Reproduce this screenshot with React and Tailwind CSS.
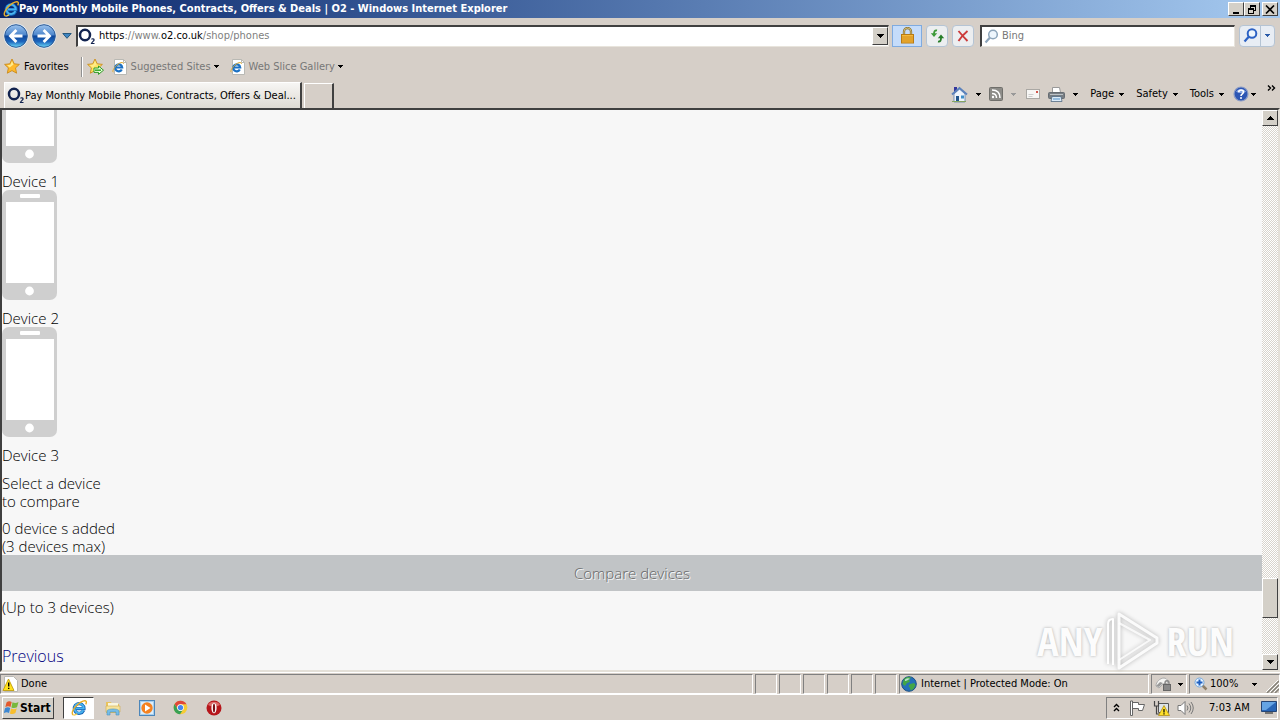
import React from "react";

const raised =
  "border border-t-white border-l-white border-r-[#404040] border-b-[#404040] bg-[#d4d0c8]";
const sunken =
  "border border-t-[#808080] border-l-[#808080] border-r-white border-b-white";

function Caret({ className = "text-black" }) {
  return (
    <svg className={`shrink-0 ${className}`} width="5" height="3" viewBox="0 0 5 3" fill="currentColor" shapeRendering="crispEdges" aria-hidden="true">
      <path d="M0 0h5v1H0zM1 1h3v1H1zM2 2h1v1H2z" />
    </svg>
  );
}

function ArrowGlyph({ up = false }) {
  return (
    <svg width="7" height="4" viewBox="0 0 7 4" shapeRendering="crispEdges" aria-hidden="true">
      <path d={up ? "M3 0h1v1H3zM2 1h3v1H2zM1 2h5v1H1zM0 3h7v1H0z" : "M0 0h7v1H0zM1 1h5v1H1zM2 2h3v1H2zM3 3h1v1H3z"} />
    </svg>
  );
}

function IeIcon({ size = 16 }) {
  return (
    <svg className="shrink-0" width={size} height={size} viewBox="0 0 16 16" fill="none" aria-hidden="true">
      <path d="M12.6 10.4A4.9 4.9 0 1 1 13 8.6H5" stroke="#1565b8" strokeWidth="3.2" />
      <path d="M12.4 10.2A4.7 4.7 0 1 1 12.8 8.4H5" stroke="#49b4ef" strokeWidth="1.8" />
      <path d="M2.2 14.8C-.2 13.2 2.4 8.2 6.6 4.5 10.2 1.3 14.6-.3 15.2 1.6c.3.8 0 1.8-.5 2.7" stroke="#e9ae27" strokeWidth="1.4" />
      <path d="M2.2 14.8c1 .5 2.6 0 4-1" stroke="#f4cd4a" strokeWidth="1.2" />
    </svg>
  );
}

function IePage() {
  return (
    <svg className="shrink-0" width="16" height="16" viewBox="0 0 16 16" fill="none" aria-hidden="true">
      <path d="M2.5.5h9l3 3v12h-12z" fill="#fff" stroke="#b9b9b4" />
      <path d="M11.5.5v3h3" stroke="#b9b9b4" />
      <path d="M9.800 10.500A3.500 3.500 0 1 1 10.200 8.500H4" stroke="#1d72c4" strokeWidth="2.200" />
      <path d="M1.3 13.2C-.3 12 3 7.5 6 5.2 8.500 3.300 11.500 2.800 11.500 4.800" stroke="#e2aa2b" />
    </svg>
  );
}

function O2Icon() {
  return (
    <svg className="shrink-0" width="18" height="17" viewBox="0 0 18 17" fill="none" aria-hidden="true">
      <ellipse cx="7" cy="7" rx="5" ry="5.300" stroke="#12234f" strokeWidth="2.500" />
      <path d="M13.500 11.400c.6-1 2.700-.8 2.600.5-.1 1.200-2 1.800-2.600 3.600h3" stroke="#12234f" strokeWidth="1.200" />
    </svg>
  );
}

function NavArrow({ flip = false }) {
  const id = flip ? "nav-forward" : "nav-back";
  return (
    <svg width="26" height="26" viewBox="0 0 26 26" aria-hidden="true">
      <defs>
        <linearGradient id={id} x1="0" y1="0" x2="0" y2="1">
          <stop offset="0" stopColor="#9cc3ee" />
          <stop offset=".45" stopColor="#4d86cc" />
          <stop offset=".5" stopColor="#0d459b" />
          <stop offset=".75" stopColor="#1d66bd" />
          <stop offset="1" stopColor="#6fdcfa" />
        </linearGradient>
      </defs>
      <circle cx="13" cy="13" r="12.4" fill="#e4edf5" />
      <circle cx="13" cy="13" r="11.3" fill={`url(#${id})`} stroke="#2a5793" />
      <path
        d="M19.5 11.5H11l3.4-3.4-2-2L5.5 13l6.9 6.9 2-2L11 14.5h8.5z"
        fill="#fff"
        transform={flip ? "translate(26 0) scale(-1 1)" : undefined}
      />
    </svg>
  );
}

function Star({ add = false }) {
  return (
    <svg className="shrink-0" width="17" height="17" viewBox="0 0 17 17" aria-hidden="true">
      <path d="M8 1l2.2 4.8 5.2.6-3.9 3.5 1.1 5.3L8 12.6l-4.7 2.6 1.1-5.3L.6 6.4l5.2-.6z" fill={add ? "#ffe566" : "#ffb92b"} stroke="#c98a1b" strokeWidth=".9" />
      <path d="M8 3l1.5 3.6-3.8 3L3 7.2l3.4-.5z" fill="#ffeb8a" />
      {add && (
        <g>
          <path d="M7 10h4.500V8L16.500 12.200l-5 4.200v-2H7z" fill="#e9ffd9" stroke="#2f9a26" />
          <path d="M8 12.200h6" stroke="#3fae32" strokeWidth="1.600" />
        </g>
      )}
    </svg>
  );
}

function Lock() {
  return (
    <svg width="15" height="17" viewBox="0 0 15 17" fill="none" aria-hidden="true">
      <path d="M4 8V4.500a3.500 3.500 0 0 1 7 0V8" stroke="#8b7331" strokeWidth="2.300" />
      <path d="M4 8V4.500a3.500 3.500 0 0 1 7 0V8" stroke="#e0cd8a" strokeWidth=".8" />
      <rect x="1.500" y="7.500" width="12" height="8.500" fill="#f6b93a" stroke="#b87a14" />
      <path d="M2 10h11M2 12h11M2 14h11" stroke="#d08c1c" />
    </svg>
  );
}

function Refresh() {
  return (
    <svg width="15" height="14" viewBox="0 0 15 14" fill="none" aria-hidden="true">
      <path d="M7 1.500C4.800 1 4 2.500 4 5" stroke="#3d9a3a" strokeWidth="1.800" />
      <path d="M.8 4.300h6.400L4 8z" fill="#3d9a3a" />
      <path d="M8 12.500c2.200.5 3-1 3-3.500" stroke="#267d28" strokeWidth="1.800" />
      <path d="M7.800 9.200h6.400L11 5.500z" fill="#267d28" />
    </svg>
  );
}

function Stop() {
  return (
    <svg width="12" height="12" viewBox="0 0 12 12" fill="none" aria-hidden="true">
      <path d="M1.500 1C4 4 7 7.500 10.500 11M10.500 1C7.500 3.500 4 7 1.500 11" stroke="#cc3a3a" strokeWidth="1.900" />
    </svg>
  );
}

function Magnifier({ color, width = "1.5" }) {
  return (
    <svg className="shrink-0" width="15" height="15" viewBox="0 0 15 15" fill="none" aria-hidden="true">
      <circle cx="9" cy="5.500" r="4.300" stroke={color} strokeWidth={width} fill="#eef6fd" />
      <path d="M6 8.500L1.500 13.500" stroke={color} strokeWidth="2.200" />
    </svg>
  );
}

function Home() {
  return (
    <svg width="17" height="17" viewBox="0 0 17 17" aria-hidden="true">
      <path d="M3 1h3v5H3z" fill="#35369c" />
      <path d="M3 8l5.500-5L14 8v8H3z" fill="#eef4fb" stroke="#6080b0" strokeWidth=".8" />
      <path d="M1 8.500L8.500 2 16 8.500" fill="none" stroke="#5b82bc" strokeWidth="1.900" />
      <path d="M5 10h3v6H5z" fill="#21558c" />
      <path d="M10 9.500h3v3h-3z" fill="#3f8fc9" />
      <path d="M1 15.500h14" stroke="#87a560" />
    </svg>
  );
}

function Rss() {
  return (
    <svg width="14" height="14" viewBox="0 0 14 14" fill="none" aria-hidden="true">
      <rect x=".5" y=".5" width="13" height="13" rx="1" fill="#8d8c88" stroke="#706f6b" />
      <path d="M3 3c5 0 8 3 8 8M3 6.500c3 0 4.500 1.500 4.500 4.500" stroke="#fff" strokeWidth="1.500" />
      <circle cx="4" cy="10" r="1.200" fill="#fff" />
    </svg>
  );
}

function Mail() {
  return (
    <svg width="14" height="11" viewBox="0 0 14 11" fill="none" aria-hidden="true">
      <rect x=".5" y=".5" width="13" height="9" fill="#f7f6f4" stroke="#aaa8a4" />
      <path d="M2.500 5.500h5M2.500 7.500h4" stroke="#ccc" />
      <path d="M10 2h2v2h-2z" fill="#d2564b" />
    </svg>
  );
}

function Printer() {
  return (
    <svg width="17" height="15" viewBox="0 0 17 15" aria-hidden="true">
      <path d="M4.500.5h7l1 5h-8z" fill="#fff" stroke="#999" />
      <rect x=".5" y="5.500" width="16" height="6" rx="1" fill="#777d83" stroke="#666c72" />
      <path d="M2 7.500h13" stroke="#bcc2c6" />
      <path d="M4 9.500h9l1 5H3z" fill="#dcebf8" stroke="#536b83" strokeWidth=".8" />
      <path d="M5 12h7" stroke="#4e8fc7" />
    </svg>
  );
}

function Help() {
  return (
    <svg width="16" height="16" viewBox="0 0 16 16" fill="none" aria-hidden="true">
      <circle cx="8" cy="8" r="7" fill="#2d56b4" stroke="#8b9cc6" strokeWidth="1.200" />
      <path d="M3 5.500a5.500 4 0 0 1 10 0c-2 2-7 2-10 0z" fill="#86a5e2" />
      <path d="M5.700 6.300c0-3 4.800-3 4.800-.3C10.500 7.800 8 7.800 8 10" stroke="#fff" strokeWidth="1.600" />
      <circle cx="8" cy="12" r="1" fill="#fff" />
    </svg>
  );
}

function Warning() {
  return (
    <svg className="shrink-0" width="16" height="16" viewBox="0 0 16 16" aria-hidden="true">
      <path d="M2.500.5h9l4 4v11h-13z" fill="#fff" stroke="#b9b9b4" />
      <path d="M6.500 3L12 14.500H1z" fill="#ffe11c" stroke="#c29d0b" strokeWidth=".9" />
      <path d="M6 6.500h1.400v4H6zM6 11.700h1.400v1.400H6z" />
    </svg>
  );
}

function Globe() {
  return (
    <svg className="shrink-0" width="16" height="16" viewBox="0 0 16 16" aria-hidden="true">
      <circle cx="8" cy="8" r="7.300" fill="#2470b9" stroke="#1c4e83" />
      <path d="M3 3c2-2 5-2.500 7-1.500L8 4l1 2-3 1-2 3-2.500-2zM9 8l4-1 1.500 2-2 4-3 1.500L9 12 7.500 10z" fill="#43a647" />
      <path d="M4 3.500C6 2 8 2 9 3 7 3.500 6 5 4 5z" fill="#b8e4ce" />
    </svg>
  );
}

function WindowsFlag() {
  return (
    <svg className="shrink-0" width="15" height="15" viewBox="0 0 15 15" aria-hidden="true">
      <path d="M2.500 2.500C4 1 6 1 7.700 2L6.500 7C5 6 3 6 1.300 7.200z" fill="#e3592d" />
      <path d="M8.500 2.300c2 1 4 .9 6-.3L13 7.200c-2 1-3.700 1-5.600.2z" fill="#78b83d" />
      <path d="M1 8.200C2.700 7 4.700 7 6.200 8L5 13C3.500 12 1.700 12-.2 13.200z" fill="#3d87d2" />
      <path d="M7.100 8.400c2 1 3.800 1 5.700-.2L11.400 13c-2 1.300-3.800 1.300-5.500.4z" fill="#f8be2d" />
    </svg>
  );
}

function FolderIcon() {
  return (
    <svg width="16" height="16" viewBox="0 0 16 16" aria-hidden="true">
      <path d="M1 2h5l1 2h7v9H1z" fill="#e9c35c" />
      <path d="M3 3h10v4H3z" fill="#faf6dd" />
      <path d="M1 6h14v6H1z" fill="#f7e39a" stroke="#d1ad4e" strokeWidth=".6" />
      <path d="M2 15v-4c0-1 2-2 6-2s6 1 6 2v4h-3v-3H5v3z" fill="#76bde6" stroke="#4a91c0" strokeWidth=".6" />
    </svg>
  );
}

function MediaIcon() {
  return (
    <svg width="16" height="16" viewBox="0 0 16 16" aria-hidden="true">
      <rect x=".5" y=".5" width="15" height="15" fill="#a7cfee" stroke="#4c86ba" />
      <path d="M2 2h12v12H2z" fill="#dceefb" />
      <circle cx="8" cy="8" r="5.700" fill="#f58220" />
      <path d="M6 4.500L11.500 8 6 11.500z" fill="#fff" />
    </svg>
  );
}

function ChromeIcon() {
  return (
    <svg width="15" height="15" viewBox="0 0 16 16" aria-hidden="true">
      <circle cx="8" cy="8" r="7.300" fill="#f6cc35" />
      <path d="M1.700 4.300A7.300 7.300 0 0 1 14.400 4.500H8a3.500 3.500 0 0 0-3.200 5z" fill="#e0473a" />
      <path d="M1.700 4.300A7.300 7.300 0 0 0 7.500 15.300L11 9.800c-1.500 2.400-5 2.200-6.200-.2z" fill="#39a155" />
      <circle cx="8" cy="8" r="3.600" fill="#fff" />
      <circle cx="8" cy="8" r="2.800" fill="#4586ef" />
    </svg>
  );
}

function OperaIcon() {
  return (
    <svg width="16" height="16" viewBox="0 0 16 16" aria-hidden="true">
      <circle cx="8" cy="8" r="7.500" fill="#b6161b" />
      <path d="M2 5a6.700 6 0 0 1 12 0C10 7 6 7 2 5z" fill="#de6a68" />
      <ellipse cx="8" cy="8" rx="2.600" ry="5.300" fill="#fff" />
      <ellipse cx="8" cy="8" rx="1.100" ry="4.600" fill="#791015" />
    </svg>
  );
}

function Phone() {
  return (
    <svg className="block shrink-0" width="56" height="110" viewBox="0 0 56 110" aria-hidden="true">
      <rect width="55" height="110" rx="7" fill="#cfcfcf" />
      <rect x="4" y="12" width="48" height="81" fill="#fff" />
      <rect x="18" y="4" width="20" height="4" rx="1" fill="#fff" />
      <circle cx="27.500" cy="101" r="4.400" fill="#fff" />
    </svg>
  );
}

function ToolItem({ label, children, caret = "text-black" }) {
  return (
    <button type="button" aria-label={label} className="flex items-center gap-2">
      {children}
      {caret && <Caret className={caret} />}
    </button>
  );
}

function TitleBar() {
  const btn = `flex h-[14px] w-4 items-center justify-center ${raised}`;
  return (
    <header className="flex h-[18px] shrink-0 items-center bg-linear-to-r from-[#0a246a] to-[#a6caf0] pl-[3px] pr-[2px]">
      <IeIcon />
      <h1 className="flex-1 truncate font-bold text-white">
        Pay Monthly Mobile Phones, Contracts, Offers &amp; Deals | O2 - Windows Internet Explorer
      </h1>
      <div className="flex">
        <button type="button" aria-label="Minimize" className={btn}>
          <svg width="10" height="9" viewBox="0 0 10 9"><path d="M2 7h6v2H2z" /></svg>
        </button>
        <button type="button" aria-label="Restore" className={btn}>
          <svg width="10" height="9" viewBox="0 0 10 9" fill="none" stroke="#000" shapeRendering="crispEdges">
            <path d="M3.500 3V.5h5v5H7M3 1h6M1.500 3.500h5v5h-5zM1 4h6" />
          </svg>
        </button>
        <button type="button" aria-label="Close" className={`ml-[2px] ${btn}`}>
          <svg width="10" height="9" viewBox="0 0 10 9" stroke="#000" strokeWidth="1.600"><path d="M1 .5l8 8M9 .5l-8 8" /></svg>
        </button>
      </div>
    </header>
  );
}

function AddressRow() {
  const tool = "flex h-[22px] w-[22px] items-center justify-center rounded-sm border border-[#b5c4d4] bg-[#eceef0]";
  return (
    <div className="flex h-[35px] shrink-0 items-center pl-[3px] pr-[5px]">
      <button type="button" aria-label="Back"><NavArrow /></button>
      <button type="button" aria-label="Forward" className="ml-[2px]"><NavArrow flip /></button>
      <button type="button" aria-label="Recent pages" className="mx-[3px] flex w-[13px] justify-center">
        <svg width="10" height="6" viewBox="0 0 10 6"><path d="M.8.5h8.400L5 5.300z" fill="#3f86c2" stroke="#25577e" /></svg>
      </button>
      <div className="flex h-[22px] flex-1 items-center border-2 border-b border-r border-t-[#404040] border-l-[#404040] border-b-[#e8e4dc] border-r-[#e8e4dc] bg-white">
        <O2Icon />
        <a href="#address" className="ml-[3px] flex-1 text-[#808080]">
          <span className="text-black">https</span>://www.<span className="text-black">o2.co.uk</span>/shop/phones
        </a>
        <button type="button" aria-label="Show address history" className={`flex h-[18px] w-4 items-center justify-center ${raised}`}>
          <ArrowGlyph />
        </button>
      </div>
      <button type="button" aria-label="Security report" className="ml-[3px] flex h-[22px] w-[30px] items-center justify-center border border-[#7fabe0] bg-[#c5dcfa]">
        <Lock />
      </button>
      <button type="button" aria-label="Refresh" className={`ml-1 ${tool}`}><Refresh /></button>
      <button type="button" aria-label="Stop" className={`ml-1 ${tool}`}><Stop /></button>
      <label className="ml-[6px] flex h-[22px] w-[255px] items-center gap-[3px] border-2 border-b border-r border-t-[#404040] border-l-[#404040] border-b-[#e8e4dc] border-r-[#e8e4dc] bg-white pl-[2px]">
        <Magnifier color="#8da5bb" />
        <input aria-label="Search" placeholder="Bing" className="min-w-0 flex-1 bg-transparent outline-none placeholder:text-[#777]" />
      </label>
      <div className="ml-1 flex h-[22px] w-[36px] rounded-sm border border-[#b5c4d4] bg-[#e8edf4]">
        <button type="button" aria-label="Start search" className="flex w-[21px] items-center justify-center border-r border-[#b5c4d4]">
          <Magnifier color="#2d62c4" width="2" />
        </button>
        <button type="button" aria-label="Search options" className="flex flex-1 items-center justify-center">
          <Caret className="text-[#2a5aa8]" />
        </button>
      </div>
    </div>
  );
}

function FavoritesRow() {
  return (
    <div className="flex h-[27px] shrink-0 items-center pl-1">
      <button type="button" className="flex items-center gap-[3px]"><Star />Favorites</button>
      <span className="ml-3 h-5 border-l border-[#909090] border-r border-r-white" />
      <button type="button" aria-label="Add to Favorites bar" className="ml-1"><Star add /></button>
      <button type="button" className="ml-2 flex items-center gap-[3px] text-[#777]"><IePage />Suggested Sites<Caret className="text-black" /></button>
      <button type="button" className="ml-[11px] flex items-center gap-[3px] text-[#777]"><IePage />Web Slice Gallery<Caret className="text-black" /></button>
    </div>
  );
}

function TabRow() {
  return (
    <div className="flex h-7 shrink-0 items-start justify-between pr-1">
      <div className="flex items-end self-stretch pl-1">
        <button type="button" className="flex h-[26px] w-[298px] items-center border border-r-2 border-b-0 border-t-white border-l-white border-r-[#404040] bg-linear-to-b from-[#f7f6f4] to-[#dedad3] pl-[2px]">
          <O2Icon />
          <span className="min-w-0 truncate">Pay Monthly Mobile Phones, Contracts, Offers &amp; Deal...</span>
        </button>
        <button type="button" aria-label="New tab" className="ml-[2px] h-[25px] w-[30px] border border-r-2 border-b-0 border-t-white border-l-white border-r-[#404040]" />
      </div>
      <nav aria-label="Commands" className="flex h-7 items-center">
        <ToolItem label="Home"><Home /></ToolItem>
        <span className="w-2" />
        <ToolItem label="Feeds" caret="text-[#999]"><Rss /></ToolItem>
        <span className="w-[10px]" />
        <ToolItem label="Read mail" caret=""><Mail /></ToolItem>
        <span className="w-2" />
        <ToolItem label="Print"><Printer /></ToolItem>
        <div className="ml-3 flex gap-3">
          {["Page", "Safety", "Tools"].map((name) => (
            <button key={name} type="button" className="flex items-center gap-[5px]">{name}<Caret /></button>
          ))}
        </div>
        <button type="button" aria-label="Help" className="ml-[9px] flex items-center gap-[2px]"><Help /><Caret /></button>
        <button type="button" aria-label="More commands" className="mb-3 ml-[11px]">
          <svg width="9" height="6" viewBox="0 0 9 6" fill="none" stroke="#000" strokeWidth="1.400"><path d="M1 .5L3.500 3 1 5.500M5 .5L7.500 3 5 5.500" /></svg>
        </button>
      </nav>
    </div>
  );
}

function Page() {
  return (
    <main className="min-w-0 flex-1 overflow-hidden bg-[#f7f7f7] font-['Open_Sans','Noto_Sans',sans-serif] text-[15px] font-light leading-[18px] text-black">
      <div className="-mt-[57px]">
        {[1, 2, 3].map((n) => (
          <div key={n}>
            <Phone />
            <p className="mt-[9px]">Device {n}</p>
          </div>
        ))}
        <p className="mt-[10px]">Select a device<br />to compare</p>
        <p className="mt-[9px]">0 device s added<br />(3 devices max)</p>
        <button type="button" className="flex h-9 w-full items-center justify-center bg-[#c1c4c6] text-[#666] [text-shadow:1px_1px_0_#fff]">
          Compare devices
        </button>
        <p className="mt-[7px]">(Up to 3 devices)</p>
        <a href="#previous" className="mt-7 block text-base leading-6 text-[#000080]">Previous</a>
      </div>
    </main>
  );
}

function ScrollBar() {
  const btn = `flex h-4 w-4 shrink-0 items-center justify-center ${raised}`;
  return (
    <div className="flex w-4 shrink-0 flex-col bg-[repeating-conic-gradient(#d8d4cc_0_25%,#ffffff_0_50%)] bg-[length:2px_2px]">
      <button type="button" aria-label="Scroll up" className={btn}><ArrowGlyph up /></button>
      <div className="flex-1" />
      <div className={`h-10 ${raised}`} />
      <div className="h-9" />
      <button type="button" aria-label="Scroll down" className={btn}><ArrowGlyph /></button>
    </div>
  );
}

function Watermark() {
  const word = "leading-none text-[#fcfcfc] [text-shadow:0_0_3px_#aaa]";
  return (
    <div className="pointer-events-none absolute -bottom-[2px] right-11 flex items-center gap-[2px] font-['Liberation_Sans_Narrow','Open_Sans_Condensed','Roboto_Condensed','Roboto',sans-serif] text-[40px] font-light">
      <span className={word}>ANY</span>
      <svg width="60" height="62" viewBox="0 0 60 62" fill="none" strokeLinejoin="round" className="drop-shadow-[0_0_2px_#aaa]" aria-hidden="true">
        <path d="M4 54V14q0-5 5-5v46" stroke="#fff" strokeWidth="2" />
        <path d="M15 4v54l38-25v-5L15 4z" stroke="#fff" strokeOpacity=".9" strokeWidth="3" />
        <path d="M15 13l31 17-31 20" stroke="#fff" strokeOpacity=".8" strokeWidth="2" />
      </svg>
      <span className={word}>RUN</span>
    </div>
  );
}

function StatusBar() {
  const pane = `flex h-5 items-center ${sunken}`;
  return (
    <footer className="flex shrink-0 gap-[2px] border-t border-white pt-px">
      <div className={`flex-1 gap-[3px] pl-px ${pane}`}><Warning />Done</div>
      {[0, 1, 2, 3, 4, 5].map((n) => <div key={n} className={`w-[22px] ${pane}`} />)}
      <div className={`w-[250px] gap-1 pl-px ${pane}`}><Globe />Internet | Protected Mode: On</div>
      <button type="button" aria-label="Privacy report" className={`w-9 justify-between px-[3px] ${pane}`}>
        <svg width="17" height="16" viewBox="0 0 17 16" aria-hidden="true">
          <path d="M1 10C1 6 5 2 9 2c3 0 4 3 4 5L8 8l-4 4z" fill="#f5f5f3" stroke="#aaa" />
          <path d="M1 10l4-4 3 1-4 4z" fill="#999" />
          <path d="M10 9V7c0-3 4-3 4 0v2" fill="none" stroke="#888" strokeWidth="1.400" />
          <rect x="8.500" y="8.500" width="7" height="6" fill="#898989" stroke="#666" />
        </svg>
        <Caret />
      </button>
      <div className={`w-[91px] pl-1 ${pane}`}>
        <button type="button" className="flex items-center gap-[2px]">
          <svg width="14" height="14" viewBox="0 0 14 14" fill="none" aria-hidden="true">
            <path d="M8 8l4.500 4.500" stroke="#8f8069" strokeWidth="2.500" />
            <circle cx="5.500" cy="5.500" r="4.500" fill="#e6f3ff" stroke="#77a9dc" />
            <path d="M5.500 2.500v6M2.500 5.500h6" stroke="#1f5fc0" strokeWidth="2" />
          </svg>
          100%
          <Caret className="ml-3 text-black" />
        </button>
        <svg className="ml-auto self-end" width="13" height="13" viewBox="0 0 13 13" aria-hidden="true">
          <path d="M1 13L13 1M5 13l8-8M9 13l4-4" stroke="#858178" strokeWidth="1.500" />
          <path d="M0 12L12 0M4 12l9-9M8 12l5-5" stroke="#fff" />
        </svg>
      </div>
    </footer>
  );
}

function TaskBar() {
  return (
    <div className="flex h-[26px] shrink-0 items-center border-t border-white pl-[2px] pr-[2px]">
      <button type="button" className={`flex h-[22px] w-[52px] items-center gap-px pl-px text-xs font-bold ${raised}`}>
        <WindowsFlag />Start
      </button>
      <button type="button" aria-label="Internet Explorer" className="ml-[9px] flex h-[22px] w-[31px] items-center justify-center border border-t-[#404040] border-l-[#404040] border-r-white border-b-white bg-white"><IeIcon /></button>
      <div className="ml-[11px] flex items-center gap-[18px]">
        <button type="button" aria-label="File Explorer"><FolderIcon /></button>
        <button type="button" aria-label="Media Player"><MediaIcon /></button>
        <button type="button" aria-label="Chrome"><ChromeIcon /></button>
        <button type="button" aria-label="Opera"><OperaIcon /></button>
      </div>
      <div className={`ml-auto flex h-[22px] w-[172px] items-center pl-[6px] ${sunken}`}>
        <button type="button" aria-label="Show hidden icons">
          <svg width="7" height="9" viewBox="0 0 7 9" fill="none" stroke="#000" strokeWidth="1.400"><path d="M1 4l2.500-2.500L6 4M1 8l2.500-2.500L6 8" /></svg>
        </button>
        <svg className="ml-[9px]" width="17" height="16" viewBox="0 0 17 16" fill="#fff" stroke="#666" aria-hidden="true">
          <path d="M1.500 1v14.500h2V1zM3.500 2.500h6v2h6l-2 6h-4v-2h-6z" />
        </svg>
        <svg className="ml-[7px]" width="17" height="16" viewBox="0 0 17 16" aria-hidden="true">
          <path d="M5.500 3.500h10v9h-10z" fill="#dce3e8" stroke="#555" />
          <path d="M1.500 1v5h4V1M3.500 6v8H8" fill="none" stroke="#444" strokeWidth="1.200" />
          <path d="M11 5.500l5.500 10h-11z" fill="#ffe02c" stroke="#a9840c" strokeWidth=".7" />
          <path d="M10.400 9h1.200v3.500h-1.200zM10.400 13.200h1.200v1.200h-1.200z" />
        </svg>
        <svg className="ml-[7px]" width="17" height="14" viewBox="0 0 17 14" fill="none" stroke="#777" aria-hidden="true">
          <path d="M1 4.500h3l4-4v13l-4-4H1z" fill="#fff" />
          <path d="M10 4.500q2 2.500 0 5M12 2.500q3.500 4.500 0 9M14 1q4.500 6 0 12" />
        </svg>
        <time className="ml-[15px]">7:03 AM</time>
        <svg className="ml-auto" width="16" height="13" viewBox="0 0 16 13" aria-hidden="true">
          <path d="M.5.500h15v10H.5z" fill="#2865b6" stroke="#254575" />
          <path d="M1 1h14L5 9H1z" fill="#65a4e4" />
          <path d="M4 12h8" stroke="#555" strokeWidth="1.500" />
        </svg>
      </div>
    </div>
  );
}

export default function App() {
  return (
    <div className="flex h-screen flex-col overflow-hidden bg-[#d6cfc8] font-['DejaVu_Sans_Condensed','DejaVu_Sans',sans-serif] text-[11px] leading-4 text-black">
      <TitleBar />
      <AddressRow />
      <FavoritesRow />
      <TabRow />
      <div className="relative flex min-h-0 flex-1 border-2 border-t-[#404040] border-l-[#404040] border-r-[#e4e0d8] border-b-[#e4e0d8]">
        <Page />
        <ScrollBar />
        <Watermark />
      </div>
      <StatusBar />
      <TaskBar />
    </div>
  );
}
